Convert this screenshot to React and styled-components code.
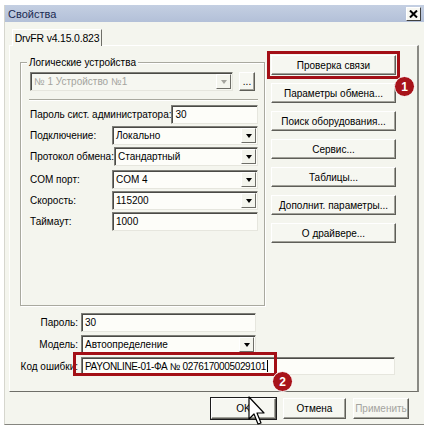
import styled, { createGlobalStyle } from "styled-components";

const GlobalStyle = createGlobalStyle`
  body { margin: 0; background: #ffffff; }
  * { box-sizing: border-box; }
`;

const Screen = styled.div`
  position: relative;
  width: 428px;
  height: 427px;
  overflow: hidden;
  background: #ffffff;
  padding: 5px 0 0 4px;
  font-family: "Liberation Sans", Arial, sans-serif;
  font-size: 10px;
  color: #000000;
`;

const Window = styled.div`
  width: 420px;
  height: 420px;
  display: flex;
  flex-direction: column;
  background: #f4f5ee;
  border-left: 1px solid #d6d6ce;
  border-bottom: 1px solid #85857f;
`;

const TitleBar = styled.div`
  height: 17px;
  display: flex;
  align-items: center;
  justify-content: space-between;
  padding: 0 3px 0 3px;
  background: linear-gradient(#c4cfe2, #b3c0d8);
  font-size: 11px;
  color: #1a2a52;
`;

const CloseButton = styled.div`
  width: 15px;
  height: 14px;
  display: flex;
  align-items: center;
  justify-content: center;
  background: #f7f7f2;
  border: 1px solid;
  border-color: #ffffff #404040 #404040 #ffffff;
`;

const Body = styled.div`
  flex: 1;
  padding: 7px 0 0 4px;
  display: flex;
  flex-direction: column;
`;

const TabStrip = styled.div`
  display: flex;
  padding-left: 3px;
  position: relative;
  z-index: 1;
  margin-bottom: -1px;
`;

const Tab = styled.div`
  width: 90px;
  height: 17px;
  display: flex;
  align-items: center;
  justify-content: center;
  background: #f4f5ee;
  border-top: 1px solid #ffffff;
  border-left: 1px solid #ffffff;
  border-right: 1px solid #6e6e68;
  font-size: 10.5px;
  letter-spacing: -0.2px;
  white-space: nowrap;
`;

const TabPage = styled.div`
  width: 410px;
  height: 347px;
  padding: 9px 0 0 10px;
  border-top: 1px solid #ffffff;
  border-left: 1px solid #ffffff;
  border-right: 2px solid #8a8a84;
  border-bottom: 1px solid #6e6e68;
`;

const TopSection = styled.div`
  display: flex;
  align-items: flex-start;
  gap: 6px;
`;

const GroupBox = styled.div`
  position: relative;
  width: 245px;
  height: 244px;
  margin-top: 7px;
  padding: 9px 6px 0 9px;
  border: 1px solid #a9a99f;
  box-shadow: inset 1px 1px 0 #ffffff, 1px 1px 0 #ffffff;
  display: flex;
  flex-direction: column;
  gap: 2px;
`;

const Legend = styled.span`
  position: absolute;
  top: -7px;
  left: 6px;
  padding: 0 2px;
  background: #f4f5ee;
  line-height: 13px;
`;

const DeviceRow = styled.div`
  display: flex;
  align-items: center;
  gap: 6px;
`;

const Separator = styled.div`
  width: 229px;
  height: 2px;
  margin: 6px 0 2px -1px;
  border-top: 1px solid #a9a99f;
  border-bottom: 1px solid #ffffff;
`;

const FieldRow = styled.div`
  display: flex;
  align-items: center;
  justify-content: space-between;
  height: 19px;
  margin-top: ${(p) => p.$extra || 0}px;
`;

const Label = styled.span`
  white-space: nowrap;
`;

const Box = styled.div`
  width: ${(p) => p.$w}px;
  height: ${(p) => p.$h || 19}px;
  display: flex;
  align-items: center;
  padding-left: 3px;
  background: ${(p) => (p.$disabled ? "#f6f7f1" : "#fdfdf9")};
  color: ${(p) => (p.$disabled ? "#a4a49e" : "#000000")};
  border: 1px solid;
  border-color: #7e7e78 #e6e6de #e6e6de #7e7e78;
  box-shadow: inset 1px 1px 0 #4a4a46;
  letter-spacing: ${(p) => p.$tight || 0}px;
  white-space: nowrap;
  overflow: hidden;
`;

const BoxText = styled.span`
  flex: 1;
`;

const DropArrow = styled.div`
  width: 15px;
  height: 15px;
  margin-right: 1px;
  display: flex;
  align-items: center;
  justify-content: center;
  background: #f4f5ee;
  border: 1px solid;
  border-color: #ffffff #6e6e68 #6e6e68 #ffffff;
  &::after {
    content: "";
    border-left: 3.5px solid transparent;
    border-right: 3.5px solid transparent;
    border-top: 4px solid ${(p) => (p.$disabled ? "#a4a49e" : "#000000")};
  }
`;

const Button = styled.div`
  width: ${(p) => p.$w || 125}px;
  height: ${(p) => p.$h || 20}px;
  display: flex;
  align-items: center;
  justify-content: center;
  background: #f6f7f1;
  border: 1px solid;
  border-color: #ffffff #5e5e58 #5e5e58 #ffffff;
  box-shadow: inset -1px -1px 0 #a2a29a, 0 0 0 ${(p) => (p.$default ? 1 : 0)}px #1c1c1c;
  color: ${(p) => (p.$disabled ? "#a4a49e" : "#000000")};
  white-space: nowrap;
`;

const ButtonColumn = styled.div`
  display: flex;
  flex-direction: column;
  gap: 8px;
`;

const Highlighted = styled.div`
  position: relative;
  outline: 3px solid #a30f16;
  outline-offset: 1px;
`;

const Badge = styled.div`
  position: absolute;
  width: 21px;
  height: 21px;
  border-radius: 50%;
  display: flex;
  align-items: center;
  justify-content: center;
  background: #a8131a;
  border: 1px solid #ffffff;
  color: #ffffff;
  font-family: "Liberation Sans", Arial, sans-serif;
  font-weight: bold;
  font-size: 12px;
  z-index: 3;
`;

const BottomForm = styled.div`
  display: grid;
  grid-template-columns: 58px auto;
  column-gap: 3px;
  row-gap: 3px;
  margin-top: 7px;
  align-items: center;
`;

const RightLabel = styled.span`
  text-align: right;
  white-space: nowrap;
`;

const ErrorCell = styled.div`
  position: relative;
`;

const ErrorFrame = styled.div`
  position: absolute;
  left: -8px;
  top: -5px;
  width: 204px;
  height: 24px;
  border: 3px solid #a30f16;
  pointer-events: none;
`;

const Caret = styled.span`
  display: inline-block;
  width: 1px;
  height: 12px;
  margin-left: 1px;
  background: #000000;
  vertical-align: middle;
`;

const Footer = styled.div`
  display: flex;
  justify-content: flex-end;
  gap: 7px;
  padding: 6px 15px 0 0;
`;

const Cursor = styled.svg`
  position: absolute;
  left: 248px;
  top: 396px;
  z-index: 4;
`;

function Combo({ w, children, disabled }) {
  return (
    <Box $w={w} $disabled={disabled}>
      <BoxText>{children}</BoxText>
      <DropArrow $disabled={disabled} />
    </Box>
  );
}

export default function App() {
  return (
    <>
      <GlobalStyle />
      <Screen>
        <Window>
          <TitleBar>
            <span>Свойства</span>
            <CloseButton>
              <svg width="9" height="8" viewBox="0 0 9 8">
                <path d="M1 0.5 L8 7.5 M8 0.5 L1 7.5" stroke="#000" strokeWidth="2" />
              </svg>
            </CloseButton>
          </TitleBar>
          <Body>
            <TabStrip>
              <Tab>DrvFR v4.15.0.823</Tab>
            </TabStrip>
            <TabPage>
              <TopSection>
                <GroupBox>
                  <Legend>Логические устройства</Legend>
                  <DeviceRow>
                    <Combo w={203} disabled>
                      № 1 Устройство №1
                    </Combo>
                    <Button $w={16} $h={19}>...</Button>
                  </DeviceRow>
                  <Separator />
                  <FieldRow>
                    <Label>Пароль сист. администратора:</Label>
                    <Box $w={90}>30</Box>
                  </FieldRow>
                  <FieldRow>
                    <Label>Подключение:</Label>
                    <Combo w={146}>Локально</Combo>
                  </FieldRow>
                  <FieldRow>
                    <Label>Протокол обмена:</Label>
                    <Combo w={146}>Стандартный</Combo>
                  </FieldRow>
                  <FieldRow $extra={2}>
                    <Label>COM порт:</Label>
                    <Combo w={146}>COM 4</Combo>
                  </FieldRow>
                  <FieldRow>
                    <Label>Скорость:</Label>
                    <Combo w={146}>115200</Combo>
                  </FieldRow>
                  <FieldRow>
                    <Label>Таймаут:</Label>
                    <Box $w={146}>1000</Box>
                  </FieldRow>
                </GroupBox>
                <ButtonColumn>
                  <Highlighted>
                    <Button>Проверка связи</Button>
                    <Badge style={{ left: 123, top: 21 }}>1</Badge>
                  </Highlighted>
                  <Button>Параметры обмена...</Button>
                  <Button>Поиск оборудования...</Button>
                  <Button>Сервис...</Button>
                  <Button>Таблицы...</Button>
                  <Button>Дополнит. параметры...</Button>
                  <Button>О драйвере...</Button>
                </ButtonColumn>
              </TopSection>
              <BottomForm>
                <RightLabel>Пароль:</RightLabel>
                <Box $w={175}>30</Box>
                <RightLabel>Модель:</RightLabel>
                <Combo w={175}>Автоопределение</Combo>
                <RightLabel>Код ошибки:</RightLabel>
                <ErrorCell>
                  <Box $w={314} $h={18} $tight={-0.35}>
                    PAYONLINE-01-ФА № 0276170005029101
                    <Caret />
                  </Box>
                  <ErrorFrame />
                  <Badge style={{ left: 191, top: 14 }}>2</Badge>
                </ErrorCell>
              </BottomForm>
            </TabPage>
            <Footer>
              <Button $w={65} $h={21} $default>OK</Button>
              <Button $w={63} $h={21}>Отмена</Button>
              <Button $w={56} $h={21} $disabled>Применить</Button>
            </Footer>
          </Body>
        </Window>
        <Cursor width="20" height="32" viewBox="0 0 20 32">
          <path
            d="M1 1 L1 23 L6 18 L10 28 L13 27 L9 17 L16 17 Z"
            fill="#ffffff"
            stroke="#000000"
            strokeWidth="1.2"
            strokeLinejoin="round"
          />
        </Cursor>
      </Screen>
    </>
  );
}
